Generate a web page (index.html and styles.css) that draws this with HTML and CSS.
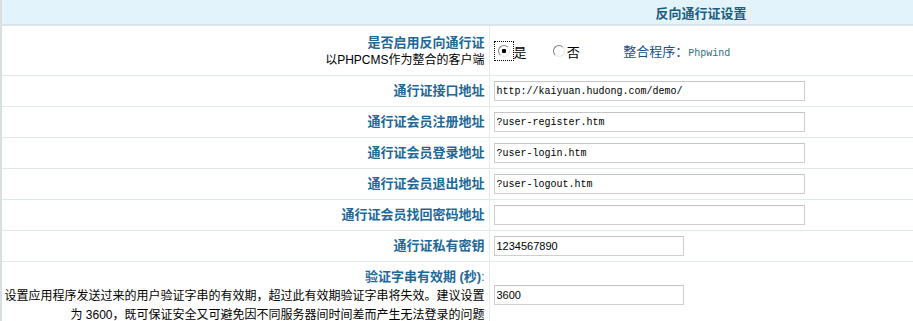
FILE: index.html
```html
<!DOCTYPE html>
<html>
<head>
	<meta charset="utf-8">
	<title>反向通行证设置</title>
	<link rel="stylesheet" href="styles.css">
</head>
<body>

	<table class="settings">
		<tr>
			<th class="head-left"></th>
			<th class="head-title">反向通行证设置</th>
		</tr>
		<tr class="tall">
			<td class="label">
				<strong>是否启用反向通行证</strong><br>
				<span class="note">以PHPCMS作为整合的客户端</span>
			</td>
			<td class="field">
				<span class="focus"><input type="radio" name="enable" class="radio" checked></span><span class="opt">是</span>
				<input type="radio" name="enable" class="radio second"><span class="opt">否</span>
				<span class="program">整合程序：<span class="program-name">Phpwind</span></span>
			</td>
		</tr>
		<tr>
			<td class="label"><strong>通行证接口地址</strong></td>
			<td class="field"><input type="text" class="text long mono" value="http://kaiyuan.hudong.com/demo/"></td>
		</tr>
		<tr>
			<td class="label"><strong>通行证会员注册地址</strong></td>
			<td class="field"><input type="text" class="text long mono" value="?user-register.htm"></td>
		</tr>
		<tr>
			<td class="label"><strong>通行证会员登录地址</strong></td>
			<td class="field"><input type="text" class="text long mono" value="?user-login.htm"></td>
		</tr>
		<tr>
			<td class="label"><strong>通行证会员退出地址</strong></td>
			<td class="field"><input type="text" class="text long mono" value="?user-logout.htm"></td>
		</tr>
		<tr>
			<td class="label"><strong>通行证会员找回密码地址</strong></td>
			<td class="field"><input type="text" class="text long mono" value=""></td>
		</tr>
		<tr>
			<td class="label"><strong>通行证私有密钥</strong></td>
			<td class="field"><input type="text" class="text short" value="1234567890"></td>
		</tr>
		<tr class="last">
			<td class="label">
				<strong>验证字串有效期 (秒)</strong>:<br>
				<span class="note">设置应用程序发送过来的用户验证字串的有效期，超过此有效期验证字串将失效。建议设置<br>为 3600，既可保证安全又可避免因不同服务器间时间差而产生无法登录的问题</span>
			</td>
			<td class="field"><input type="text" class="text short" value="3600"></td>
		</tr>
	</table>

</body>
</html>
```

FILE: styles.css
```css
		body{
			margin: 0;
			font-family: "Liberation Sans", "Noto Sans CJK SC", sans-serif;
			font-size: 12px;
			color: #000;
			background: #fff;
		}

		.settings{
			width: 913px;
			border-collapse: collapse;
			border-left: 2px solid #d7dfe0;
		}

		.settings th{
			height: 24px;
			padding: 0;
			background-color: #e3f3fb;
			border-bottom: 2px solid #d6e6ec;
		}

		.head-left{
			width: 487px;
		}

		.head-title{
			font-size: 13px;
			font-weight: bold;
			color: #1b5d80;
			text-align: center;
		}

		.settings td{
			height: 30px;
			padding: 0;
			border-bottom: 1px solid #e0e8ea;
			vertical-align: middle;
		}

		.settings tr.tall td{
			height: 47px;
		}

		.settings tr.last td{
			height: 62px;
			border-bottom: none;
		}

		.label{
			text-align: right;
			padding-right: 4px !important;
			border-right: 1px solid #e6ecee;
			line-height: 17px;
		}

		.label strong{
			font-size: 13px;
			color: #1d6897;
		}

		.tall .label{
			padding-top: 2px !important;
		}

		.last .label{
			line-height: 19px;
			padding-top: 3px !important;
			color: #1d6897;
		}

		.note{
			color: #000;
			font-size: 12px;
		}

		.field{
			padding-left: 4px !important;
		}

		.text{
			box-sizing: border-box;
			height: 20px;
			border: 1px solid #cfcfcf;
			border-top-color: #c4c4c4;
			padding: 0 2px;
			margin: 0;
			font-family: "Liberation Sans", sans-serif;
			font-size: 11px;
			color: #000;
			display: block;
		}

		.mono{
			font-family: "Liberation Mono", monospace;
			font-size: 10px;
		}

		.long{
			width: 311px;
		}

		.short{
			width: 190px;
		}

		.focus{
			display: inline-block;
			vertical-align: middle;
			border: 1px dotted #000;
			padding: 3px;
			line-height: 0;
		}

		.radio{
			appearance: none;
			-webkit-appearance: none;
			width: 12px;
			height: 12px;
			margin: 0;
			border-radius: 50%;
			border: 1px solid;
			border-color: #808080 #e8e8e8 #e8e8e8 #808080;
			background: #fff;
			vertical-align: middle;
		}

		.radio:checked{
			background: radial-gradient(circle, #000 0 2px, #fff 2.5px);
		}

		.second{
			margin-left: 23px;
			margin-right: 2px;
		}

		.opt{
			vertical-align: middle;
			font-size: 13px;
		}

		.program{
			margin-left: 40px;
			color: #204f86;
			font-size: 13px;
			vertical-align: middle;
		}

		.program-name{
			font-family: "Liberation Mono", monospace;
			font-size: 10px;
			color: #2f6f7c;
		}
```
